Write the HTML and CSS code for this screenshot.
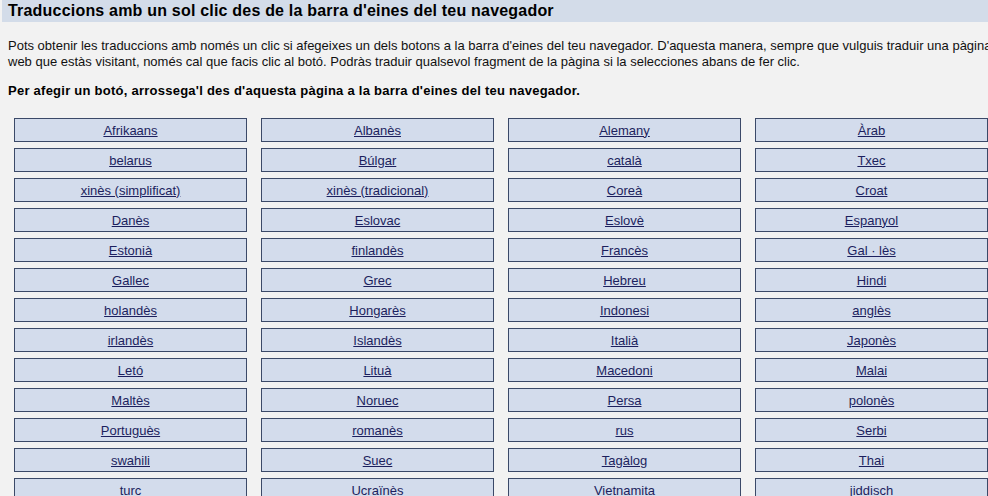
FILE: index.html
```html
<!DOCTYPE html>
<html lang="ca">
<head>
<meta charset="utf-8">
<title>Traduccions amb un sol clic</title>
<link rel="stylesheet" href="styles.css">
</head>
<body>
<div class="page">
  <h1 class="title">Traduccions amb un sol clic des de la barra d'eines del teu navegador</h1>
  <p class="intro">Pots obtenir les traduccions amb només un clic si afegeixes un dels botons a la barra d'eines del teu navegador. D'aquesta manera, sempre que vulguis traduir una pàgina<br>web que estàs visitant, només cal que facis clic al botó. Podràs traduir qualsevol fragment de la pàgina si la selecciones abans de fer clic.</p>
  <p class="instr">Per afegir un botó, arrossega'l des d'aquesta pàgina a la barra d'eines del teu navegador.</p>
  <div class="grid">
    <div class="cell"><a href="#">Afrikaans</a></div>
    <div class="cell"><a href="#">Albanès</a></div>
    <div class="cell"><a href="#">Alemany</a></div>
    <div class="cell"><a href="#">Àrab</a></div>
    <div class="cell"><a href="#">belarus</a></div>
    <div class="cell"><a href="#">Búlgar</a></div>
    <div class="cell"><a href="#">català</a></div>
    <div class="cell"><a href="#">Txec</a></div>
    <div class="cell"><a href="#">xinès (simplificat)</a></div>
    <div class="cell"><a href="#">xinès (tradicional)</a></div>
    <div class="cell"><a href="#">Coreà</a></div>
    <div class="cell"><a href="#">Croat</a></div>
    <div class="cell"><a href="#">Danès</a></div>
    <div class="cell"><a href="#">Eslovac</a></div>
    <div class="cell"><a href="#">Eslovè</a></div>
    <div class="cell"><a href="#">Espanyol</a></div>
    <div class="cell"><a href="#">Estonià</a></div>
    <div class="cell"><a href="#">finlandès</a></div>
    <div class="cell"><a href="#">Francès</a></div>
    <div class="cell"><a href="#">Gal · lès</a></div>
    <div class="cell"><a href="#">Gallec</a></div>
    <div class="cell"><a href="#">Grec</a></div>
    <div class="cell"><a href="#">Hebreu</a></div>
    <div class="cell"><a href="#">Hindi</a></div>
    <div class="cell"><a href="#">holandès</a></div>
    <div class="cell"><a href="#">Hongarès</a></div>
    <div class="cell"><a href="#">Indonesi</a></div>
    <div class="cell"><a href="#">anglès</a></div>
    <div class="cell"><a href="#">irlandès</a></div>
    <div class="cell"><a href="#">Islandès</a></div>
    <div class="cell"><a href="#">Italià</a></div>
    <div class="cell"><a href="#">Japonès</a></div>
    <div class="cell"><a href="#">Letó</a></div>
    <div class="cell"><a href="#">Lituà</a></div>
    <div class="cell"><a href="#">Macedoni</a></div>
    <div class="cell"><a href="#">Malai</a></div>
    <div class="cell"><a href="#">Maltès</a></div>
    <div class="cell"><a href="#">Noruec</a></div>
    <div class="cell"><a href="#">Persa</a></div>
    <div class="cell"><a href="#">polonès</a></div>
    <div class="cell"><a href="#">Portuguès</a></div>
    <div class="cell"><a href="#">romanès</a></div>
    <div class="cell"><a href="#">rus</a></div>
    <div class="cell"><a href="#">Serbi</a></div>
    <div class="cell"><a href="#">swahili</a></div>
    <div class="cell"><a href="#">Suec</a></div>
    <div class="cell"><a href="#">Tagàlog</a></div>
    <div class="cell"><a href="#">Thai</a></div>
    <div class="cell"><a href="#">turc</a></div>
    <div class="cell"><a href="#">Ucraïnès</a></div>
    <div class="cell"><a href="#">Vietnamita</a></div>
    <div class="cell"><a href="#">jiddisch</a></div>
  </div>
</div>
</body>
</html>
```

FILE: styles.css
```css
html, body {
  margin: 0;
  padding: 0;
  background: #f2f2f2;
  overflow: hidden;
}
.page {
  width: 1010px;
  font-family: "Liberation Sans", Arial, sans-serif;
  color: #000;
}
.title {
  margin: 0 0 0 2px;
  height: 22px;
  padding-left: 6px;
  background: #d3dce9;
  font-size: 16px;
  font-weight: bold;
  letter-spacing: 0.2px;
  line-height: 21px;
  white-space: nowrap;
}
.intro {
  margin: 16px 0 0 8px;
  font-size: 13px;
  line-height: 16px;
  white-space: nowrap;
  color: #111;
}
.instr {
  margin: 13px 0 0 8px;
  font-size: 13px;
  line-height: 16px;
  font-weight: bold;
  letter-spacing: 0.25px;
  white-space: nowrap;
}
.grid {
  margin: 19px 0 0 14px;
  display: grid;
  grid-template-columns: repeat(4, 233px);
  grid-auto-rows: 24px;
  column-gap: 14px;
  row-gap: 6px;
}
.cell {
  box-sizing: border-box;
  background: #d3dcec;
  border: 1px solid #3b4968;
  display: flex;
  align-items: center;
  justify-content: center;
  font-size: 13px;
}
.cell a {
  color: #1c1f5e;
  text-decoration: underline;
}
```
